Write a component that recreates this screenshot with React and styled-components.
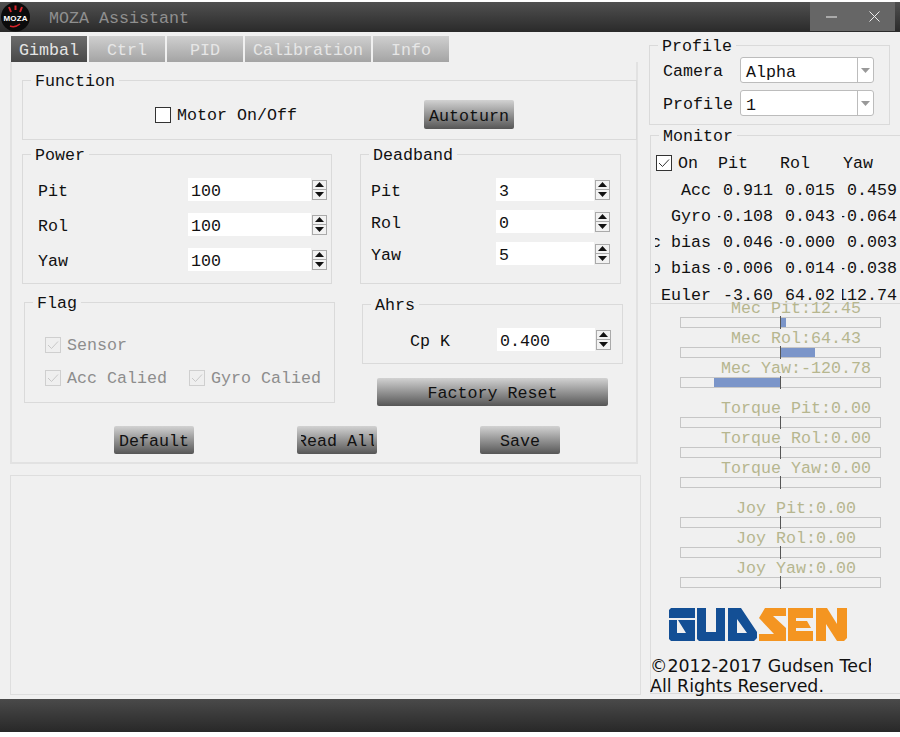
import React from 'react';
import styled, { createGlobalStyle } from 'styled-components';

const GlobalStyle = createGlobalStyle`
    html, body {
        margin: 0;
        padding: 0;
        background: #fff;
    }
    body {
        font-family: 'Liberation Mono', 'DejaVu Sans Mono', monospace;
        font-size: 16.67px;
        color: #111;
    }
    * {
        box-sizing: border-box;
    }
`;

const Window = styled.div`
    width: 900px;
    height: 737px;
    padding: 2px 0 5px;
    display: flex;
    flex-direction: column;
    overflow: hidden;
    background: #fff;
`;

const TitleBar = styled.div`
    height: 30px;
    flex: none;
    display: flex;
    align-items: center;
    padding: 0 5px 0 1px;
    gap: 19px;
    background: linear-gradient(#505050, #2a2a2a);
`;

const Title = styled.div`
    flex: 1;
    color: #8f8f8f;
    line-height: 30px;
    padding-top: 4px;
`;

const WinButtons = styled.div`
    display: flex;
    align-self: flex-start;
    height: 29px;
    background: #666;
`;

const WinButton = styled.div`
    width: 43px;
    display: flex;
    align-items: center;
    justify-content: center;
    & + & {
        width: 42px;
    }
`;

const Main = styled.div`
    flex: 1;
    display: grid;
    grid-template-columns: 649px 251px;
    background: #f0f0f0;
    overflow: hidden;
`;

const LeftColumn = styled.div`
    padding: 4px 0 0 10px;
    display: flex;
    flex-direction: column;
`;

const Tabs = styled.div`
    display: flex;
    gap: 2px;
    height: 26px;
    padding-left: 1px;
`;

const Tab = styled.div`
    width: ${(p) => p.$width || 76}px;
    display: flex;
    align-items: center;
    justify-content: center;
    padding-top: 2px;
    color: ${(p) => (p.$active ? '#e4e4e4' : '#e6e6e6')};
    background: ${(p) =>
        p.$active ? 'linear-gradient(#6c6c6c, #484848)' : 'linear-gradient(#cfcfcf, #a4a4a4)'};
`;

const Page = styled.div`
    width: 628px;
    height: 402px;
    border: 2px solid #e2e2e2;
    border-top: none;
    padding: 8px 0 0 10px;
`;

const Group = styled.fieldset`
    margin: 0;
    margin-left: ${(p) => p.$indent || 0}px;
    margin-top: ${(p) => p.$top || 0}px;
    padding: 0;
    width: ${(p) => p.$w}px;
    height: ${(p) => p.$h}px;
    border: 1px solid #dadada;
    min-width: 0;
`;

const Legend = styled.legend`
    margin-left: 8px;
    padding: 4px 4px 0;
    line-height: 16px;
    color: #111;
`;

const FunctionRow = styled.div`
    display: flex;
    align-items: center;
    padding: 10px 0 0 132px;
`;

const CheckLabel = styled.label`
    display: flex;
    align-items: center;
    gap: 6px;
    width: ${(p) => (p.$w ? `${p.$w}px` : 'auto')};
    color: ${(p) => (p.$disabled ? '#8d8d8d' : '#111')};
    line-height: 16px;
`;

const CheckText = styled.span`
    padding-top: 2px;
`;

const CheckBox = styled.span`
    width: 16px;
    height: 16px;
    flex: none;
    display: flex;
    align-items: center;
    justify-content: center;
    border: 1px solid ${(p) => (p.$disabled ? '#cfcfcf' : '#333')};
    background: ${(p) => (p.$disabled ? '#efefef' : '#fff')};
`;

const Btn = styled.div`
    width: ${(p) => p.$w || 80}px;
    height: ${(p) => p.$h || 28}px;
    display: flex;
    align-items: center;
    justify-content: center;
    padding-top: 3px;
    white-space: nowrap;
    flex: none;
    border-radius: 2px;
    color: #111;
    margin-left: ${(p) => p.$left || 0}px;
    margin-top: ${(p) => p.$top || 0}px;
    background: linear-gradient(#d2d2d2, #565656);
`;

const ClippedText = styled.span`
    width: 73px;
    display: flex;
    justify-content: center;
    overflow: hidden;
`;

const Columns = styled.div`
    display: grid;
    grid-template-columns: 338px 1fr;
    margin-top: 4px;
`;

const Stack = styled.div`
    display: flex;
    flex-direction: column;
    align-items: flex-start;
`;

const Rows = styled.div`
    display: flex;
    flex-direction: column;
    gap: ${(p) => p.$gap}px;
    padding: 14px 0 0 ${(p) => p.$left}px;
`;

const FieldRow = styled.div`
    display: flex;
    align-items: center;
    height: 23px;
`;

const FieldLabel = styled.div`
    width: ${(p) => p.$w}px;
    flex: none;
    padding-top: 2px;
`;

const RowLabel = styled(FieldLabel)`
    padding-top: 4px;
`;

const SpinField = styled.div`
    width: ${(p) => p.$w}px;
    height: 23px;
    padding: 3px 0 0 3px;
    line-height: 21px;
    background: #fff;
`;

const SpinButtons = styled.div`
    width: 15px;
    height: 20px;
    margin-left: 1px;
    display: flex;
    flex-direction: column;
    border: 1px solid #aaa;
    background: #f2f2f2;
`;

const SpinHalf = styled.div`
    flex: 1;
    display: flex;
    align-items: center;
    justify-content: center;
    & + & {
        border-top: 1px solid #aaa;
    }
`;

const FlagRows = styled.div`
    display: flex;
    flex-direction: column;
    gap: 15px;
    padding: 24px 0 0 20px;
`;

const FlagRow = styled.div`
    display: flex;
`;

const BottomButtons = styled.div`
    display: flex;
    gap: 103px;
    margin-top: 20px;
    padding-left: 92px;
`;

const LowerPanel = styled.div`
    width: 631px;
    height: 220px;
    margin-top: 11px;
    border: 1px solid #dedede;
`;

const RightColumn = styled.div`
    padding-top: 3px;
    display: flex;
    flex-direction: column;
`;

const ProfileRows = styled.div`
    display: flex;
    flex-direction: column;
    gap: 7px;
    padding: 2px 0 0 13px;
`;

const ProfileRow = styled.div`
    display: flex;
    align-items: center;
`;

const Combo = styled.div`
    width: 134px;
    height: 26px;
    display: flex;
    border: 1px solid #bcbcbc;
    border-radius: 3px;
    background: #fff;
`;

const ComboText = styled.div`
    flex: 1;
    padding: 3px 0 0 5px;
    line-height: 23px;
`;

const ComboArrow = styled.div`
    width: 16px;
    display: flex;
    align-items: center;
    justify-content: center;
    border-left: 1px solid #bcbcbc;
`;

const MonitorGrid = styled.div`
    display: grid;
    grid-template-columns: 56px 55px 55px 55px;
    column-gap: 7px;
    grid-auto-rows: 26.25px;
    padding-left: 4px;
`;

const MonitorHead = styled.div`
    display: grid;
    grid-template-columns: 61px 62px 63px 55px;
    height: 16px;
    margin: 9px 0 6px;
    padding-left: 5px;
    line-height: 16px;
`;

const HeadCell = styled.div`
    padding: 2px 0 0 1px;
`;

const Cell = styled.div`
    display: flex;
    align-items: center;
    justify-content: flex-end;
    padding-top: 2px;
    overflow: hidden;
    white-space: nowrap;
`;

const MeterPanel = styled.div`
    height: 390px;
    margin-left: 1px;
    border-left: 1px solid #dcdcdc;
    border-bottom: 1px solid #dcdcdc;
`;

const MeterGroups = styled.div`
    display: flex;
    flex-direction: column;
    gap: 10px;
    margin-top: -6px;
`;

const MeterLabel = styled.div`
    height: 19px;
    line-height: 21px;
    width: 290px;
    text-align: center;
    color: #b6b68f;
    white-space: nowrap;
`;

const MeterTrack = styled.div`
    position: relative;
    width: 201px;
    height: 11px;
    margin-left: 29px;
    border: 1px solid #c6c6c6;
`;

const MeterFill = styled.div`
    position: absolute;
    top: 0;
    bottom: 0;
    background: #7b95c9;
`;

const MeterTick = styled.div`
    position: absolute;
    left: 99px;
    top: -2px;
    bottom: -2px;
    width: 1px;
    background: #555;
`;

const LogoWrap = styled.div`
    margin: 20px 0 0 18px;
    height: 33px;
    svg {
        display: block;
    }
`;

const Copyright = styled.div`
    margin: 15px 0 0 -1px;
    width: 221px;
    overflow: hidden;
    white-space: nowrap;
    font-family: 'DejaVu Sans', sans-serif;
    font-size: 17.4px;
    line-height: 20px;
    color: #111;
`;

const StatusBar = styled.div`
    height: 33px;
    flex: none;
    background: linear-gradient(#4a4a4a, #282828);
`;

const Tick = ({ color }) => (
    <svg width="12" height="12" viewBox="0 0 12 12" fill="none">
        <path d="M1 6l3.5 3.5L11 2.5" stroke={color} strokeWidth="1" />
    </svg>
);

const Check = ({ checked, disabled, children, w }) => (
    <CheckLabel $disabled={disabled} $w={w}>
        <CheckBox $disabled={disabled}>{checked && <Tick color={disabled ? '#c8c8c8' : '#333'} />}</CheckBox>
        <CheckText>{children}</CheckText>
    </CheckLabel>
);

const Spin = () => (
    <SpinButtons>
        <SpinHalf>
            <svg width="9" height="5" viewBox="0 0 9 5">
                <path d="M4.5 0L9 5H0z" fill="#111" />
            </svg>
        </SpinHalf>
        <SpinHalf>
            <svg width="9" height="5" viewBox="0 0 9 5">
                <path d="M0 0h9L4.5 5z" fill="#111" />
            </svg>
        </SpinHalf>
    </SpinButtons>
);

const SpinRow = ({ label, value, labelWidth, fieldWidth }) => (
    <FieldRow>
        <RowLabel $w={labelWidth}>{label}</RowLabel>
        <SpinField $w={fieldWidth}>{value}</SpinField>
        <Spin />
    </FieldRow>
);

const ComboBox = ({ value }) => (
    <Combo>
        <ComboText>{value}</ComboText>
        <ComboArrow>
            <svg width="9" height="5" viewBox="0 0 9 5">
                <path d="M0 0h9L4.5 5z" fill="#999" />
            </svg>
        </ComboArrow>
    </Combo>
);

const MozaBadge = () => (
    <svg width="29" height="30" viewBox="0 0 29 30">
        <circle cx="14.5" cy="15" r="14.5" fill="#0b0b0b" />
        <path d="M8 5l2 5M14.5 3.5v4.5M21 5l-2 5" stroke="#d8232a" strokeWidth="2" fill="none" />
        <path d="M9 24q5 2 10-2" stroke="#d8232a" strokeWidth="1.5" fill="none" />
        <text
            x="14.5"
            y="18.5"
            textAnchor="middle"
            fontFamily="Liberation Sans"
            fontWeight="700"
            fontSize="8"
            textLength="24"
            fill="#fff"
        >
            MOZA
        </text>
    </svg>
);

const GudsenLogo = () => (
    <svg width="178" height="33" viewBox="0 0 178 33">
        <g fill="#134f95">
            <path d="M0 2L2 0H26V10H0z" />
            <path d="M0 12H8V25H17L9 12H26V33H2L0 31z" />
            <path d="M28 0H37V24H47V0H56V33H30L28 31z" />
            <path d="M59 0H72L88 24V30L85 33H59zM68 11V25H78z" fillRule="evenodd" />
        </g>
        <g fill="#f49521">
            <path d="M96 0H117V8H104L117 20V33H90V26H105L90 10z" />
            <path d="M119 0H144V10H127V13H138L142 20H127V23H144V33H119z" />
            <path d="M147 0H158L168 16V0H178V30L175 33H168L157 16V33H147z" />
        </g>
    </svg>
);

const Meter = ({ label, from = 0, to = 0 }) => (
    <div>
        <MeterLabel>{label}</MeterLabel>
        <MeterTrack>
            {to !== from && <MeterFill style={{ left: from, width: to - from }} />}
            <MeterTick />
        </MeterTrack>
    </div>
);

const monitorRows = [
    ['Acc', '0.911', '0.015', '0.459'],
    ['Gyro', '-0.108', '0.043', '-0.064'],
    ['Acc bias', '0.046', '-0.000', '0.003'],
    ['Gyro bias', '-0.006', '0.014', '-0.038'],
    ['Euler', '-3.60', '64.02', '112.74'],
];

export default function App() {
    return (
        <Window>
            <GlobalStyle />
            <TitleBar>
                <MozaBadge />
                <Title>MOZA Assistant</Title>
                <WinButtons>
                    <WinButton>
                        <svg width="11" height="11" viewBox="0 0 11 11">
                            <path d="M0 6h11" stroke="#eee" strokeWidth="1" />
                        </svg>
                    </WinButton>
                    <WinButton>
                        <svg width="11" height="11" viewBox="0 0 11 11">
                            <path d="M0.5 0.5l10 10M10.5 0.5l-10 10" stroke="#eee" strokeWidth="1" />
                        </svg>
                    </WinButton>
                </WinButtons>
            </TitleBar>
            <Main>
                <LeftColumn>
                    <Tabs>
                        <Tab $active>Gimbal</Tab>
                        <Tab>Ctrl</Tab>
                        <Tab>PID</Tab>
                        <Tab $width={126}>Calibration</Tab>
                        <Tab>Info</Tab>
                    </Tabs>
                    <Page>
                        <Group $w={615} $h={70}>
                            <Legend>Function</Legend>
                            <FunctionRow>
                                <Check>Motor On/Off</Check>
                                <Btn $w={90} $h={29} $left={127}>
                                    Autoturn
                                </Btn>
                            </FunctionRow>
                        </Group>
                        <Columns>
                            <Stack>
                                <Group $w={310} $h={140}>
                                    <Legend>Power</Legend>
                                    <Rows $gap={12} $left={15}>
                                        <SpinRow label="Pit" value="100" labelWidth={150} fieldWidth={123} />
                                        <SpinRow label="Rol" value="100" labelWidth={150} fieldWidth={123} />
                                        <SpinRow label="Yaw" value="100" labelWidth={150} fieldWidth={123} />
                                    </Rows>
                                </Group>
                                <Group $w={311} $h={111} $indent={2} $top={8}>
                                    <Legend>Flag</Legend>
                                    <FlagRows>
                                        <FlagRow>
                                            <Check checked disabled>
                                                Sensor
                                            </Check>
                                        </FlagRow>
                                        <FlagRow>
                                            <Check checked disabled w={144}>
                                                Acc Calied
                                            </Check>
                                            <Check checked disabled>
                                                Gyro Calied
                                            </Check>
                                        </FlagRow>
                                    </FlagRows>
                                </Group>
                            </Stack>
                            <Stack>
                                <Group $w={261} $h={140}>
                                    <Legend>Deadband</Legend>
                                    <Rows $gap={9} $left={10}>
                                        <SpinRow label="Pit" value="3" labelWidth={125} fieldWidth={98} />
                                        <SpinRow label="Rol" value="0" labelWidth={125} fieldWidth={98} />
                                        <SpinRow label="Yaw" value="5" labelWidth={125} fieldWidth={98} />
                                    </Rows>
                                </Group>
                                <Group $w={261} $h={70} $indent={2} $top={10}>
                                    <Legend>Ahrs</Legend>
                                    <Rows $gap={0} $left={47}>
                                        <SpinRow label="Cp K" value="0.400" labelWidth={87} fieldWidth={98} />
                                    </Rows>
                                </Group>
                                <Btn $w={231} $left={17} $top={14}>
                                    Factory Reset
                                </Btn>
                            </Stack>
                        </Columns>
                        <BottomButtons>
                            <Btn>Default</Btn>
                            <Btn>
                                <ClippedText>Read All</ClippedText>
                            </Btn>
                            <Btn>Save</Btn>
                        </BottomButtons>
                    </Page>
                    <LowerPanel />
                </LeftColumn>
                <RightColumn>
                    <Group $w={241} $h={90}>
                        <Legend>Profile</Legend>
                        <ProfileRows>
                            <ProfileRow>
                                <FieldLabel $w={77}>Camera</FieldLabel>
                                <ComboBox value="Alpha" />
                            </ProfileRow>
                            <ProfileRow>
                                <FieldLabel $w={77}>Profile</FieldLabel>
                                <ComboBox value="1" />
                            </ProfileRow>
                        </ProfileRows>
                    </Group>
                    <Group $w={251} $h={179} $indent={1}>
                        <Legend>Monitor</Legend>
                        <MonitorHead>
                            <Check checked>On</Check>
                            <HeadCell>Pit</HeadCell>
                            <HeadCell>Rol</HeadCell>
                            <HeadCell>Yaw</HeadCell>
                        </MonitorHead>
                        <MonitorGrid>
                            {monitorRows.map((row) =>
                                row.map((text, i) => <Cell key={row[0] + i}>{text}</Cell>),
                            )}
                        </MonitorGrid>
                    </Group>
                    <MeterPanel>
                        <MeterGroups>
                            <div>
                                <Meter label="Mec Pit:12.45" from={100} to={105} />
                                <Meter label="Mec Rol:64.43" from={100} to={134} />
                                <Meter label="Mec Yaw:-120.78" from={33} to={100} />
                            </div>
                            <div>
                                <Meter label="Torque Pit:0.00" />
                                <Meter label="Torque Rol:0.00" />
                                <Meter label="Torque Yaw:0.00" />
                            </div>
                            <div>
                                <Meter label="Joy Pit:0.00" />
                                <Meter label="Joy Rol:0.00" />
                                <Meter label="Joy Yaw:0.00" />
                            </div>
                        </MeterGroups>
                        <LogoWrap>
                            <GudsenLogo />
                        </LogoWrap>
                        <Copyright>
                            ©2012-2017 Gudsen Technology
                            <br />
                            All Rights Reserved.
                        </Copyright>
                    </MeterPanel>
                </RightColumn>
            </Main>
            <StatusBar />
        </Window>
    );
}
